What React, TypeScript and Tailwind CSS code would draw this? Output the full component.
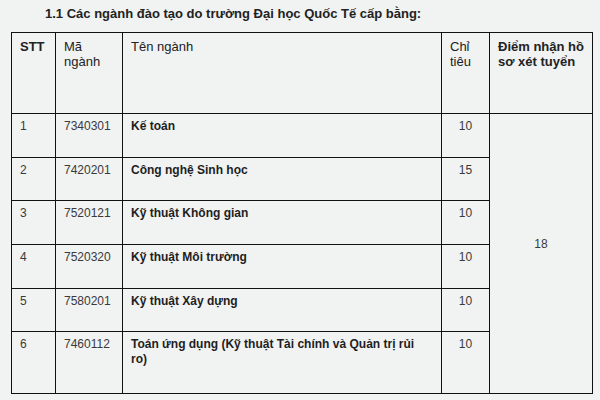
import React from 'react';

type Row = { stt: string; ma: string; ten: string; chiTieu: string; h: string };

const rows: Row[] = [
  { stt: '1', ma: '7340301', ten: 'Kế toán', chiTieu: '10', h: 'h-[44px]' },
  { stt: '2', ma: '7420201', ten: 'Công nghệ Sinh học', chiTieu: '15', h: 'h-[43px]' },
  { stt: '3', ma: '7520121', ten: 'Kỹ thuật Không gian', chiTieu: '10', h: 'h-[44px]' },
  { stt: '4', ma: '7520320', ten: 'Kỹ thuật Môi trường', chiTieu: '10', h: 'h-[44px]' },
  { stt: '5', ma: '7580201', ten: 'Kỹ thuật Xây dựng', chiTieu: '10', h: 'h-[43px]' },
  {
    stt: '6',
    ma: '7460112',
    ten: 'Toán ứng dụng (Kỹ thuật Tài chính và Quản trị rủi ro)',
    chiTieu: '10',
    h: 'h-[62px]',
  },
];

// header cells 13px, body cells 12px like the original page
const th = 'border border-[#111] align-top pt-[6px] px-[8px] leading-[15px] text-left';
const td = 'border border-[#111] align-top pt-[5px] px-[8px] leading-[15px]';

const App = () => {
  return (
    <div className="w-[600px] h-[400px] overflow-hidden bg-[#f1f2f2] text-[13px] text-[#333] font-['Liberation_Sans',Arial,sans-serif]">
      <p className="pt-[6px] pl-[45px] font-bold text-[#222] leading-[15px]">
        1.1 Các ngành đào tạo do trường Đại học Quốc Tế cấp bằng:
      </p>

      <table className="ml-[11px] mt-[11px] w-[581px] table-fixed border-collapse">
        <colgroup>
          <col className="w-[44px]" />
          <col className="w-[67px]" />
          <col className="w-[319px]" />
          <col className="w-[48px]" />
          <col className="w-[103px]" />
        </colgroup>
        <thead>
          <tr className="h-[81px] text-[#222]">
            <th className={`${th} font-bold`}>STT</th>
            <th className={`${th} font-normal`}>
              Mã
              <br />
              ngành
            </th>
            <th className={`${th} font-normal`}>Tên ngành</th>
            <th className={`${th} font-normal`}>
              Chỉ
              <br />
              tiêu
            </th>
            <th className={`${th} font-bold`}>Điểm nhận hồ sơ xét tuyển</th>
          </tr>
        </thead>
        <tbody className="text-[12px] text-[#3a3a3a]">
          {rows.map((r, i) => (
            <tr key={r.stt} className={r.h}>
              <td className={td}>{r.stt}</td>
              <td className={td}>{r.ma}</td>
              <td className={`${td} font-bold text-[#1e1e1e]`}>{r.ten}</td>
              <td className={`${td} text-center`}>{r.chiTieu}</td>
              {i === 0 && (
                <td
                  rowSpan={6}
                  className="border border-[#111] align-top text-center leading-[15px] pt-[123px]"
                >
                  18
                </td>
              )}
            </tr>
          ))}
        </tbody>
      </table>
    </div>
  );
};

export default App;
